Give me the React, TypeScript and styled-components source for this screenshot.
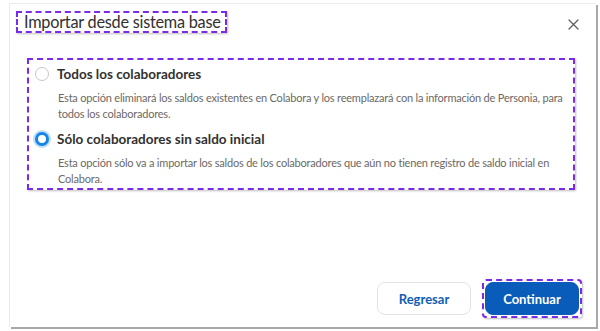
import React from "react";
import styled, { createGlobalStyle } from "styled-components";

const GlobalStyle = createGlobalStyle`
  html, body { margin: 0; padding: 0; background: #ffffff; }
  body { font-family: Lato, "Open Sans", "Liberation Sans", sans-serif; }
  * { box-sizing: border-box; }
`;

const Page = styled.div`
  width: 600px;
  height: 331px;
  padding: 3px 0 0 9px;
  background: #ffffff;
`;

const Dialog = styled.div`
  width: 587px;
  height: 324px;
  background: #ffffff;
  border-top: 1px solid #ececec;
  border-left: 1px solid #ececec;
  box-shadow: 2px 2px 0 #a9a9a9;
  display: flex;
  flex-direction: column;
`;

const Header = styled.div`
  display: flex;
  align-items: center;
  justify-content: space-between;
  padding: 7px 16px 0 6px;
`;

const Marked = styled.div`
  border: 2px dashed #7b2ae6;
  box-shadow: 1px 1px 2px rgba(0, 0, 0, 0.25);
`;

const Title = styled(Marked)`
  font-size: 16.3px;
  color: #323130;
  line-height: 18px;
  padding: 0 4px 0 6px;
  letter-spacing: -0.25px;
`;

const CloseButton = styled.button`
  border: none;
  background: transparent;
  padding: 0;
  width: 14px;
  height: 14px;
  display: flex;
  align-items: center;
  justify-content: center;
  color: #605e5c;
  margin-top: 4px;
`;

const Body = styled.div`
  padding: 25px 21px 0 17px;
  flex: 1;
`;

const Group = styled(Marked)`
  padding: 3px 2px 2px 6px;
  display: flex;
  flex-direction: column;
`;

const Option = styled.div`
  display: flex;
  flex-direction: column;
`;

const OptionRow = styled.label`
  display: flex;
  align-items: center;
  gap: 8px;
  height: 22px;
`;

const Radio = styled.span<{ $checked?: boolean }>`
  width: 14px;
  height: 14px;
  border-radius: 50%;
  flex: none;
  background: #ffffff;
  border: ${(p) => (p.$checked ? "3.5px solid #1485e6" : "1px solid #c6c6c6")};
  box-shadow: ${(p) => (p.$checked ? "0 0 0 2px rgba(20, 133, 230, 0.28)" : "none")};
`;

const Label = styled.span`
  font-size: 13.5px;
  font-weight: 700;
  color: #323130;
`;

const Description = styled.p`
  margin: 0;
  padding: 5px 0 0 23px;
  font-size: 11px;
  line-height: 15.5px;
  color: #6b6966;
  letter-spacing: -0.2px;
`;

const Spacer = styled.div`
  height: 7px;
`;

const Footer = styled.div`
  display: flex;
  justify-content: flex-end;
  align-items: center;
  gap: 11px;
  padding: 0 14px 9px 0;
`;

const Button = styled.button<{ $primary?: boolean }>`
  width: 94px;
  height: 33px;
  border-radius: 8px;
  font-family: inherit;
  font-size: 13px;
  font-weight: 700;
  cursor: pointer;
  border: 1px solid ${(p) => (p.$primary ? "#0a5cba" : "#e3e3e3")};
  background: ${(p) => (p.$primary ? "#0a5cba" : "#ffffff")};
  color: ${(p) => (p.$primary ? "#ffffff" : "#0f5eb6")};
`;

const ButtonMark = styled(Marked)`
  padding: 1px;
  border-radius: 4px;
`;

const CloseIcon = () => (
  <svg width="11" height="11" viewBox="0 0 11 11" fill="none">
    <path d="M1 1 L10 10 M10 1 L1 10" stroke="#605e5c" strokeWidth="1.3" strokeLinecap="round" />
  </svg>
);

export default function App() {
  return (
    <>
      <GlobalStyle />
      <Page>
        <Dialog>
          <Header>
            <Title>Importar desde sistema base</Title>
            <CloseButton aria-label="Cerrar">
              <CloseIcon />
            </CloseButton>
          </Header>
          <Body>
            <Group>
              <Option>
                <OptionRow>
                  <Radio />
                  <Label>Todos los colaboradores</Label>
                </OptionRow>
                <Description>
                  Esta opción eliminará los saldos existentes en Colabora y los reemplazará con la información de Personia, para todos los colaboradores.
                </Description>
              </Option>
              <Spacer />
              <Option>
                <OptionRow>
                  <Radio $checked />
                  <Label>Sólo colaboradores sin saldo inicial</Label>
                </OptionRow>
                <Description>
                  Esta opción sólo va a importar los saldos de los colaboradores que aún no tienen registro de saldo inicial en Colabora.
                </Description>
              </Option>
            </Group>
          </Body>
          <Footer>
            <Button>Regresar</Button>
            <ButtonMark>
              <Button $primary>Continuar</Button>
            </ButtonMark>
          </Footer>
        </Dialog>
      </Page>
    </>
  );
}
